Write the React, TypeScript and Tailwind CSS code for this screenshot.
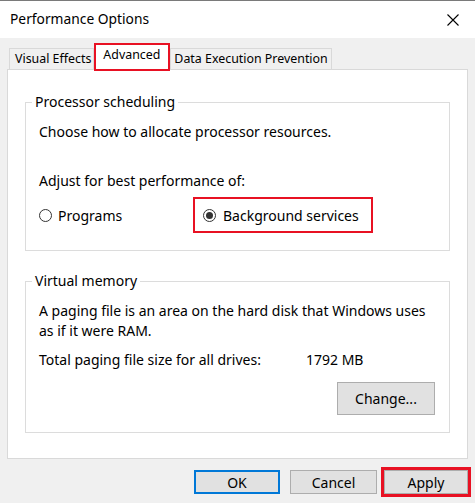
import React from 'react';

function Radio({ checked }: { checked?: boolean }) {
  return (
    <span className="flex h-[13px] w-[13px] items-center justify-center rounded-full border border-[#333] bg-white">
      {checked && <span className="h-[7px] w-[7px] rounded-full bg-[#333]" />}
    </span>
  );
}

function Button({ label, className = '' }: { label: string; className?: string }) {
  return (
    <button className={`flex items-center justify-center bg-[#e1e1e1] text-[14px] text-black ${className}`}>
      {label}
    </button>
  );
}

export default function App() {
  return (
    <div
      className="flex h-[503px] w-[475px] flex-col bg-[#f0f0f0] text-black"
      style={{ fontFamily: '"Noto Sans", "Open Sans", sans-serif' }}
    >
      {/* Title bar */}
      <div className="flex h-[38px] items-center justify-between border-t border-[#7a7a7a] bg-white pl-[10px] pr-[14px]">
        <span className="text-[13.8px]">Performance Options</span>
        <svg width="12" height="12" viewBox="0 0 12 12" className="mr-[2px]">
          <path d="M0.5 0.5L11.5 11.5M11.5 0.5L0.5 11.5" stroke="#000" strokeWidth="1.1" />
        </svg>
      </div>

      <div className="flex flex-col px-[7px] pt-[5px]">
        {/* Tabs */}
        <div className="relative z-10 -mb-[2px] flex items-end pl-[2px] text-[12.4px]">
          <div className="mb-[2px] flex h-[21px] items-center border border-b-0 border-[#d9d9d9] bg-[#f0f0f0] pl-[5px] pr-[2px] pt-[1px]">
            Visual Effects
          </div>
          <div className="flex h-[28px] items-center border-2 border-[#e81123] bg-white pl-[7px] pr-[8px] pb-[3px]">
            Advanced
          </div>
          <div className="mb-[2px] flex h-[21px] items-center border border-b-0 border-[#d9d9d9] bg-[#f0f0f0] px-[3px] pt-[1px]">
            Data Execution Prevention
          </div>
        </div>

        {/* Panel */}
        <div className="flex h-[390px] flex-col border border-[#d9d9d9] bg-white px-[17px] pt-[22px] text-[14px]">
          <fieldset className="border border-[#dcdcdc] px-[13px] pb-[17px]">
            <legend className="-ml-[7px] px-[3px] leading-[20px]">Processor scheduling</legend>
            <div className="pt-[10px] leading-[20px]">Choose how to allocate processor resources.</div>
            <div className="mt-[29px] leading-[20px]">Adjust for best performance of:</div>
            <div className="mt-[6px] flex items-center">
              <div className="flex w-[154px] items-center gap-[6px]">
                <Radio />
                <span>Programs</span>
              </div>
              <div className="flex h-[36px] w-[180px] items-center gap-[7px] border-2 border-[#e81123] pl-[8px]">
                <Radio checked />
                <span>Background services</span>
              </div>
            </div>
          </fieldset>

          <fieldset className="mt-[20px] border border-[#dcdcdc] pb-[17px] pl-[13px] pr-[14px]">
            <legend className="-ml-[7px] px-[3px] leading-[20px]">Virtual memory</legend>
            <div className="pt-[10px] leading-[20px]">
              A paging file is an area on the hard disk that Windows uses as if it were RAM.
            </div>
            <div className="mt-[9px] flex leading-[20px]">
              <span className="w-[267px]">Total paging file size for all drives:</span>
              <span>1792 MB</span>
            </div>
            <div className="mt-[12px] flex justify-end">
              <Button label="Change..." className="h-[33px] w-[98px] border border-[#adadad]" />
            </div>
          </fieldset>
        </div>

        {/* Bottom buttons */}
        <div className="mt-[8px] flex items-center justify-end gap-[10px]">
          <Button label="OK" className="h-[24px] w-[86px] border-2 border-[#0078d7]" />
          <Button label="Cancel" className="h-[24px] w-[87px] border border-[#adadad]" />
          <div className="-mr-[3px] ml-[-6px] flex h-[30px] w-[90px] items-center justify-center border-[3px] border-[#e81123]">
            <Button label="Apply" className="h-[24px] w-[84px] border border-[#adadad]" />
          </div>
        </div>
      </div>
    </div>
  );
}
